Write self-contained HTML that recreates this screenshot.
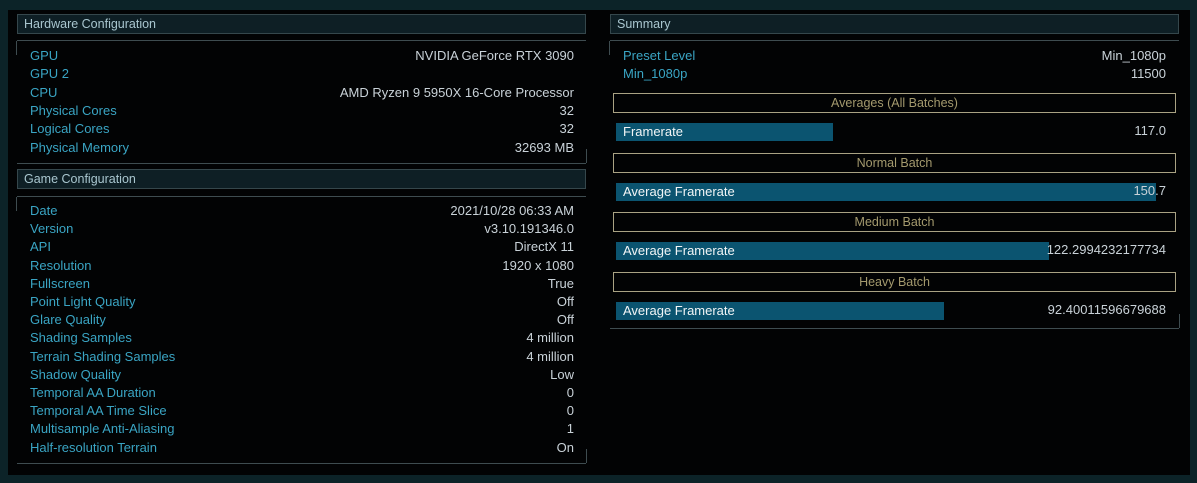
<!DOCTYPE html>
<html><head><meta charset="utf-8"><style>
*{margin:0;padding:0;box-sizing:border-box}
html,body{width:1197px;height:483px;overflow:hidden}
body{background:#0c2328;position:relative;font-family:"Liberation Sans",sans-serif;font-size:13px}
.in{position:absolute;left:8px;top:10px;width:1182px;height:465px;background:#020304}
.hd{position:absolute;height:20px;background:#0e1f25;border:1px solid #35474c;color:#a9c6cf;padding-left:6px;line-height:18px;font-size:12.5px}
.ct{position:absolute;border-top:1px solid #3e4c50;border-bottom:1px solid #3e4c50}
.ct:before{content:"";position:absolute;left:-1px;top:0;width:1px;height:14px;background:#3e4c50}
.ct:after{content:"";position:absolute;right:-1px;bottom:0;width:1px;height:14px;background:#3e4c50}
.r{position:absolute;left:0;right:0;height:18px;line-height:18px;white-space:nowrap}
.l{position:absolute;left:0;color:#3aa5c4}
.v{position:absolute;right:0;color:#c9d2d8}
.bx{position:absolute;left:613px;width:563px;height:20px;border:1px solid #a9a283;color:#a49a6e;text-align:center;line-height:18px;font-size:12.5px}
.bar{position:absolute;left:616px;height:18px;background:#0b5470;color:#f2f5f6;padding-left:7px;line-height:18px;white-space:nowrap}
.bv{position:absolute;right:31px;color:#c9d2d8;line-height:18px;white-space:nowrap}
</style></head><body>
<div class="in"></div>
<div class="hd" style="left:17px;top:14px;width:569px">Hardware Configuration</div>
<div class="ct" style="left:17px;top:40px;width:569px;height:124px"></div>
<div style="position:absolute;left:30px;top:47px;width:544px;height:120px">
<div class="r" style="top:0"><span class="l">GPU</span><span class="v">NVIDIA GeForce RTX 3090</span></div>
<div class="r" style="top:18.3px"><span class="l">GPU 2</span></div>
<div class="r" style="top:36.6px"><span class="l">CPU</span><span class="v">AMD Ryzen 9 5950X 16-Core Processor</span></div>
<div class="r" style="top:54.9px"><span class="l">Physical Cores</span><span class="v">32</span></div>
<div class="r" style="top:73.2px"><span class="l">Logical Cores</span><span class="v">32</span></div>
<div class="r" style="top:91.5px"><span class="l">Physical Memory</span><span class="v">32693 MB</span></div>
</div>
<div class="hd" style="left:17px;top:169px;width:569px">Game Configuration</div>
<div class="ct" style="left:17px;top:196px;width:569px;height:268px"></div>
<div style="position:absolute;left:30px;top:202px;width:544px;height:260px">
<div class="r" style="top:0"><span class="l">Date</span><span class="v">2021/10/28 06:33 AM</span></div>
<div class="r" style="top:18.2px"><span class="l">Version</span><span class="v">v3.10.191346.0</span></div>
<div class="r" style="top:36.4px"><span class="l">API</span><span class="v">DirectX 11</span></div>
<div class="r" style="top:54.6px"><span class="l">Resolution</span><span class="v">1920 x 1080</span></div>
<div class="r" style="top:72.8px"><span class="l">Fullscreen</span><span class="v">True</span></div>
<div class="r" style="top:91px"><span class="l">Point Light Quality</span><span class="v">Off</span></div>
<div class="r" style="top:109.2px"><span class="l">Glare Quality</span><span class="v">Off</span></div>
<div class="r" style="top:127.4px"><span class="l">Shading Samples</span><span class="v">4 million</span></div>
<div class="r" style="top:145.6px"><span class="l">Terrain Shading Samples</span><span class="v">4 million</span></div>
<div class="r" style="top:163.8px"><span class="l">Shadow Quality</span><span class="v">Low</span></div>
<div class="r" style="top:182px"><span class="l">Temporal AA Duration</span><span class="v">0</span></div>
<div class="r" style="top:200.2px"><span class="l">Temporal AA Time Slice</span><span class="v">0</span></div>
<div class="r" style="top:218.4px"><span class="l">Multisample Anti-Aliasing</span><span class="v">1</span></div>
<div class="r" style="top:236.6px"><span class="l">Half-resolution Terrain</span><span class="v">On</span></div>
</div>
<div class="hd" style="left:610px;top:14px;width:569px">Summary</div>
<div class="ct" style="left:610px;top:40px;width:569px;height:289px"></div>
<div style="position:absolute;left:623px;top:47px;width:543px;height:40px">
<div class="r" style="top:0"><span class="l">Preset Level</span><span class="v">Min_1080p</span></div>
<div class="r" style="top:18px"><span class="l">Min_1080p</span><span class="v">11500</span></div>
</div>
<div class="bx" style="top:93px">Averages (All Batches)</div>
<div class="bar" style="top:123px;width:217px">Framerate</div><div class="bv" style="top:122px">117.0</div>
<div class="bx" style="top:153px">Normal Batch</div>
<div class="bar" style="top:183px;width:540px">Average Framerate</div><div class="bv" style="top:182px">150.7</div>
<div class="bx" style="top:212px">Medium Batch</div>
<div class="bar" style="top:242px;width:433px">Average Framerate</div><div class="bv" style="top:241px">122.2994232177734</div>
<div class="bx" style="top:272px">Heavy Batch</div>
<div class="bar" style="top:302px;width:328px">Average Framerate</div><div class="bv" style="top:301px">92.40011596679688</div>
</body></html>
